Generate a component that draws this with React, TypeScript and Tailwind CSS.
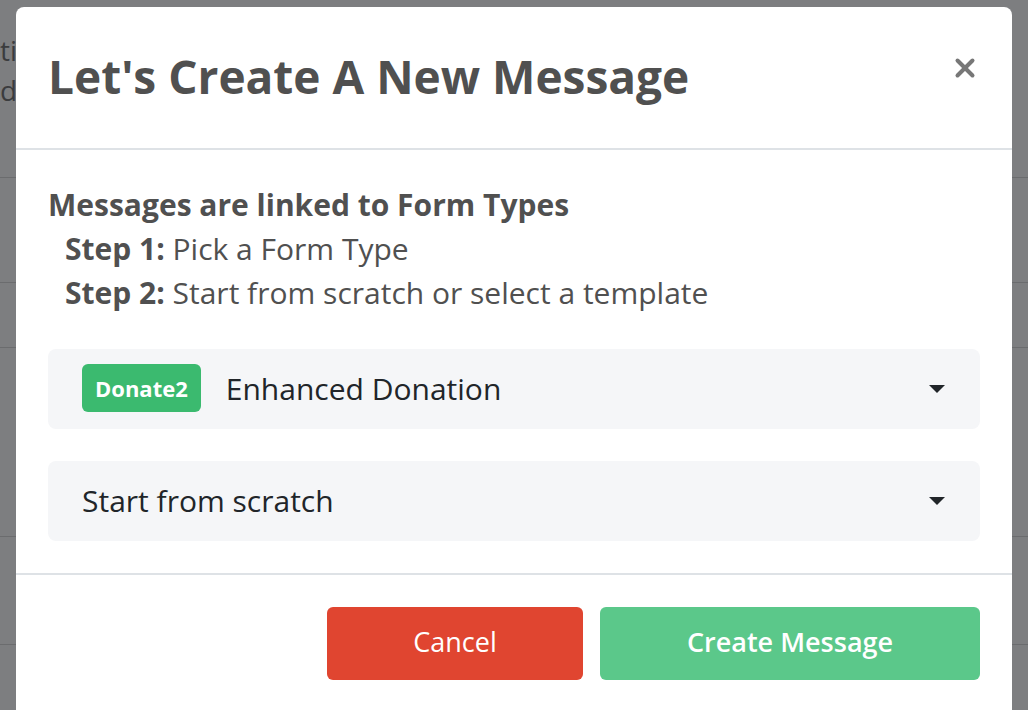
import React from 'react';
import { X } from 'lucide-react';

const font = { fontFamily: '"Open Sans", "Noto Sans", sans-serif' };

const Caret = () => (
  <svg width="18" height="10" viewBox="0 0 18 10" className="shrink-0">
    <path d="M1 1h16l-8 8z" fill="#212529" />
  </svg>
);

const SelectBox: React.FC<{ children: React.ReactNode }> = ({ children }) => (
  <div className="flex h-[80px] items-center justify-between rounded-lg bg-[#f5f6f8] pl-[34px] pr-[34px]">
    <div className="flex items-center gap-[25px] pb-[2px]">{children}</div>
    <Caret />
  </div>
);

export default function App() {
  return (
    <div className="relative h-[710px] w-[1028px] overflow-hidden bg-[#7d7e80]" style={font}>
      {/* page behind the backdrop */}
      <div className="flex flex-col text-[28px] text-[#3b3c3e]">
        <div className="h-[30px]" />
        <div className="h-[40px] leading-[40px]">ti</div>
        <div className="h-[40px] leading-[40px]">d</div>
        <div className="h-[68px] border-b border-[#6b6c6e]" />
        <div className="h-[105px] border-b border-[#6b6c6e]" />
        <div className="h-[65px] border-b border-[#6b6c6e]" />
        <div className="h-[189px] border-b border-[#6b6c6e]" />
        <div className="h-[108px] border-b border-[#6b6c6e]" />
      </div>

      {/* modal */}
      <div className="absolute left-[16px] top-[7px] flex w-[996px] flex-col rounded-lg bg-white">
        <div className="flex h-[143px] items-start justify-between border-b-2 border-[#dee2e6] pl-[32px] pr-[32px]">
          <h1 className="mt-[41px] text-[46px] font-bold leading-[56px] text-[#505050]">
            Let's Create A New Message
          </h1>
          <X className="mt-[46px] text-[#777]" size={30} strokeWidth={3.2} />
        </div>

        <div className="flex flex-col px-[32px] pb-[32px] pt-[33px]">
          <div className="text-[30px] leading-[44px] text-[#505050]">
            <div className="font-bold">Messages are linked to Form Types</div>
            <div className="pl-[17px]">
              <span className="font-bold">Step 1:</span> Pick a Form Type
            </div>
            <div className="pl-[17px]">
              <span className="font-bold">Step 2:</span> Start from scratch or select a template
            </div>
          </div>

          <div className="mt-[34px] flex flex-col gap-[32px]">
            <SelectBox>
              <span className="flex h-[48px] items-center rounded-md bg-[#3bba6f] px-[13px] text-[22px] font-bold text-white">
                Donate2
              </span>
              <span className="text-[30px] text-[#212529]">Enhanced Donation</span>
            </SelectBox>
            <SelectBox>
              <span className="text-[30px] text-[#212529]">Start from scratch</span>
            </SelectBox>
          </div>
        </div>

        <div className="flex justify-end gap-[17px] border-t-2 border-[#dee2e6] px-[32px] pb-[40px] pt-[32px]">
          <button className="h-[73px] w-[256px] rounded-md bg-[#e04530] pb-[2px] text-[27px] text-white">
            Cancel
          </button>
          <button className="h-[73px] w-[380px] rounded-md bg-[#5bc88a] pb-[2px] text-[27px] font-semibold text-white">
            Create Message
          </button>
        </div>
      </div>
    </div>
  );
}
